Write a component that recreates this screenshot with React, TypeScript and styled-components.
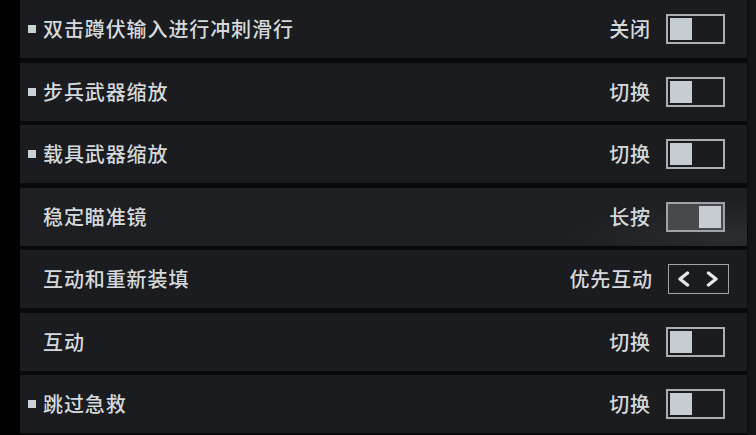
import React from "react"
import styled, { createGlobalStyle } from "styled-components"

const GlobalStyle = createGlobalStyle`
  html, body {
    margin: 0;
    padding: 0;
    background: #000;
  }
  body {
    font-family: "Noto Sans CJK SC", "Noto Sans", sans-serif;
  }
`

const Page = styled.div`
  display: grid;
  grid-template-columns: 20px 727px 1fr;
  width: 756px;
  height: 435px;
  overflow: hidden;
  background: #000;
`
const LeftStrip = styled.div`
  background: #020202;
`
const RightStrip = styled.div`
  background: #121416;
  border-left: 1px solid #0b0c0d;
`
const List = styled.div`
  display: flex;
  flex-direction: column;
  gap: 4.5px;
  background: #08090a;
`
const Row = styled.div<{ $glow?: boolean }>`
  height: 58px;
  flex: none;
  display: flex;
  align-items: center;
  padding: 0 22px 0 8px;
  background: ${({ $glow }) =>
    $glow
      ? "radial-gradient(ellipse 180px 40px at 100% 85%, #2b2d30 0%, #1d1f22 100%)"
      : "#1a1c1f"};
`
const Bullet = styled.span<{ $show: boolean }>`
  width: 8px;
  height: 8px;
  flex: none;
  margin-right: 7px;
  background: #c9d1d5;
  visibility: ${({ $show }) => ($show ? "visible" : "hidden")};
`
const Label = styled.span`
  font-size: 20px;
  font-weight: 500;
  letter-spacing: 0.9px;
  color: #d5d9dc;
  line-height: 1;
`
const Value = styled(Label)`
  margin-left: auto;
  margin-right: 15px;
`
const Toggle = styled.div<{ $on: boolean }>`
  box-sizing: border-box;
  width: 59px;
  height: 30px;
  border: 2px solid ${({ $on }) => ($on ? "#9da3a7" : "#a9afb3")};
  padding: 2px;
  display: flex;
  justify-content: ${({ $on }) => ($on ? "flex-end" : "flex-start")};
  background: ${({ $on }) => ($on ? "#474a4d" : "transparent")};
`
const Knob = styled.div`
  width: 22px;
  height: 22px;
  background: #c5cdd2;
`
const Selector = styled.div`
  box-sizing: border-box;
  width: 61px;
  height: 30px;
  margin-right: -4px;
  padding-left: 8px;
  border: 1px solid #9ea3a7;
  display: flex;
  align-items: center;
  gap: 16px;
`

const Chevron = ({ dir }: { dir: "left" | "right" }) => (
  <svg width="13" height="16" viewBox="0 0 13 16">
    <polyline
      points={dir === "left" ? "10.5,2 3,8 10.5,14" : "2.5,2 10,8 2.5,14"}
      fill="none"
      stroke="#e3e7ea"
      strokeWidth="3.4"
      strokeLinejoin="round"
      strokeLinecap="round"
    />
  </svg>
)

type Item = {
  label: string
  value: string
  bullet: boolean
  kind: "toggle" | "select"
  on?: boolean
  glow?: boolean
}

const items: Item[] = [
  { label: "双击蹲伏输入进行冲刺滑行", value: "关闭", bullet: true, kind: "toggle" },
  { label: "步兵武器缩放", value: "切换", bullet: true, kind: "toggle" },
  { label: "载具武器缩放", value: "切换", bullet: true, kind: "toggle" },
  { label: "稳定瞄准镜", value: "长按", bullet: false, kind: "toggle", on: true, glow: true },
  { label: "互动和重新装填", value: "优先互动", bullet: false, kind: "select" },
  { label: "互动", value: "切换", bullet: false, kind: "toggle" },
  { label: "跳过急救", value: "切换", bullet: true, kind: "toggle" },
]

const App = () => {
  return (
    <>
      <GlobalStyle />
      <Page>
        <LeftStrip />
        <List>
          {items.map(item => (
            <Row key={item.label} $glow={item.glow}>
              <Bullet $show={item.bullet} />
              <Label>{item.label}</Label>
              <Value>{item.value}</Value>
              {item.kind === "toggle" ? (
                <Toggle $on={!!item.on}>
                  <Knob />
                </Toggle>
              ) : (
                <Selector>
                  <Chevron dir="left" />
                  <Chevron dir="right" />
                </Selector>
              )}
            </Row>
          ))}
        </List>
        <RightStrip />
      </Page>
    </>
  )
}

export default App
